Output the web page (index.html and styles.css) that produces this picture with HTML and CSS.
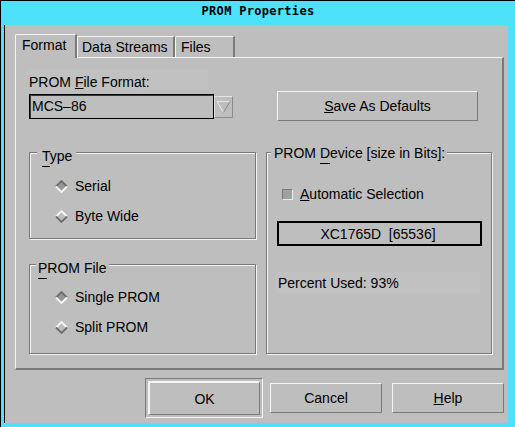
FILE: index.html
```html
<!DOCTYPE html>
<html>
<head>
<meta charset="utf-8">
<title>PROM Properties</title>
<link rel="stylesheet" href="styles.css">
</head>
<body>
<div class="frame">
  <div class="titlebar"><span class="title">PROM Properties</span></div>
  <div class="client">
    <div class="tabs">
      <div class="tab tab-active tab-format">Format</div>
      <div class="tab tab-data">Data Streams</div>
      <div class="tab tab-files">Files</div>
    </div>
    <div class="panel">
      <div class="col-left">
        <div class="field-label">PROM <span class="mn">F</span>ile Format:</div>
        <div class="combo-row">
          <div class="combo">MCS–86</div>
          <svg class="combo-arrow" width="19" height="22" viewBox="0 0 19 22">
            <path d="M0.5 21.5V0.5H18.5" stroke="#e4e4e4" fill="none"/>
            <path d="M18.5 0.5V21.5H0.5" stroke="#8a8a8a" fill="none"/>
            <path d="M3 5.5H16" stroke="#e8e8e8" fill="none"/>
            <path d="M3 5.5L9.5 16.5" stroke="#e8e8e8" fill="none"/>
            <path d="M16 5.5L9.5 16.5" stroke="#8a8a8a" fill="none"/>
          </svg>
        </div>
        <div class="group group-type">
          <div class="legend legend-type"><span class="mn-low">T</span>ype</div>
          <div class="radio radio-first-type">
            <svg class="diamond" width="13" height="13" viewBox="0 0 13 13">
              <polygon points="6.5,1 12,6.5 6.5,12 1,6.5" fill="#969696"/>
              <path d="M1 6.5L6.5 1L12 6.5" stroke="#6e6e6e" stroke-width="1.8" fill="none"/>
              <path d="M1 6.5L6.5 12L12 6.5" stroke="#f6f6f6" stroke-width="1.8" fill="none"/>
            </svg>
            <span>Serial</span>
          </div>
          <div class="radio radio-next">
            <svg class="diamond" width="13" height="13" viewBox="0 0 13 13">
              <path d="M1 6.5L6.5 1L12 6.5" stroke="#f6f6f6" stroke-width="1.8" fill="none"/>
              <path d="M1 6.5L6.5 12L12 6.5" stroke="#6e6e6e" stroke-width="1.8" fill="none"/>
            </svg>
            <span>Byte Wide</span>
          </div>
        </div>
        <div class="group group-file">
          <div class="legend legend-file"><span class="mn-low">P</span>ROM File</div>
          <div class="radio radio-first-file">
            <svg class="diamond" width="13" height="13" viewBox="0 0 13 13">
              <polygon points="6.5,1 12,6.5 6.5,12 1,6.5" fill="#969696"/>
              <path d="M1 6.5L6.5 1L12 6.5" stroke="#6e6e6e" stroke-width="1.8" fill="none"/>
              <path d="M1 6.5L6.5 12L12 6.5" stroke="#f6f6f6" stroke-width="1.8" fill="none"/>
            </svg>
            <span>Single PROM</span>
          </div>
          <div class="radio radio-next">
            <svg class="diamond" width="13" height="13" viewBox="0 0 13 13">
              <path d="M1 6.5L6.5 1L12 6.5" stroke="#f6f6f6" stroke-width="1.8" fill="none"/>
              <path d="M1 6.5L6.5 12L12 6.5" stroke="#6e6e6e" stroke-width="1.8" fill="none"/>
            </svg>
            <span>Split PROM</span>
          </div>
        </div>
      </div>
      <div class="col-right">
        <button class="btn btn-save"><span class="mn">S</span>ave As Defaults</button>
        <div class="group group-device">
          <div class="legend legend-device">PROM <span class="mn-low">D</span>evice [size in Bits]:</div>
          <div class="check-row">
            <span class="checkbox"></span>
            <span><span class="mn">A</span>utomatic Selection</span>
          </div>
          <div class="xc-box">XC1765D  [65536]</div>
          <div class="percent">Percent Used: 93%</div>
        </div>
      </div>
    </div>
    <div class="buttons">
      <div class="ok-ring"><button class="btn btn-ok">OK</button></div>
      <button class="btn btn-cancel">Cancel</button>
      <button class="btn btn-help"><span class="mn">H</span>elp</button>
    </div>
  </div>
</div>
</body>
</html>
```

FILE: styles.css
```css
* {
  box-sizing: border-box;
}

html, body {
  margin: 0;
  padding: 0;
}

body {
  width: 515px;
  height: 427px;
  overflow: hidden;
  background: #4ee1fa;
  font-family: "Liberation Sans", Arial, sans-serif;
  font-size: 14px;
  color: #000;
}

.frame {
  width: 515px;
  height: 427px;
  display: flex;
  flex-direction: column;
  background: #4ee1fa;
  border-top: 1px solid #000;
  border-left: 1px solid #000;
}

.titlebar {
  height: 24px;
  padding-bottom: 4px;
  display: flex;
  align-items: center;
  justify-content: center;
}

.title {
  font-family: "DejaVu Sans Mono", monospace;
  font-weight: bold;
  font-size: 12px;
  letter-spacing: 0.3px;
  line-height: 14px;
}

.client {
  flex: 1;
  margin: 0 7px 4px 3px;
  border-left: 1px solid #000;
  background: #bebebe;
  padding: 9px 4px 0 10px;
  display: flex;
  flex-direction: column;
}

/* Tabs */
.tabs {
  display: flex;
  align-items: flex-end;
  height: 23px;
}

.tab {
  height: 21px;
  padding-top: 2px;
  line-height: 16px;
  white-space: nowrap;
  border-top: 1px solid #f4f4f4;
  border-left: 1px solid #f4f4f4;
  border-right: 2px solid #7a7a7a;
  border-top-left-radius: 2px;
  background: #bebebe;
}

.tab-active {
  height: 24px;
  margin-bottom: -1px;
  position: relative;
  z-index: 1;
}

.tab-format {
  width: 62px;
  padding-left: 6px;
}

.tab-data {
  width: 98px;
  padding-left: 4px;
}

.tab-files {
  width: 60px;
  padding-left: 5px;
}

/* Panel */
.panel {
  height: 313px;
  display: flex;
  gap: 9px;
  padding: 12px 9px 0 13px;
  border-top: 1px solid #f4f4f4;
  border-left: 1px solid #f4f4f4;
  border-right: 2px solid #7a7a7a;
  border-bottom: 2px solid #7a7a7a;
}

.col-left {
  width: 228px;
  display: flex;
  flex-direction: column;
}

.col-right {
  width: 227px;
  display: flex;
  flex-direction: column;
}

.field-label {
  width: 179px;
  height: 20px;
  padding-top: 4px;
  line-height: 16px;
  background: #c1c1c1;
}

.mn {
  text-decoration: underline;
}

.mn-low {
  border-bottom: 1px solid #000;
  padding-bottom: 2px;
}

.combo-row {
  margin-top: 4px;
  display: flex;
  align-items: center;
  height: 25px;
}

.combo {
  width: 185px;
  height: 25px;
  border: 1px solid #000;
  box-shadow: inset 1px 1px 0 #3a3a3a;
  padding-left: 2px;
  line-height: 23px;
  white-space: nowrap;
}

.combo-arrow {
  display: block;
}

/* Groups */
.group {
  display: flex;
  flex-direction: column;
  border: 1px solid #7a7a7a;
  box-shadow: inset 1px 1px 0 #f4f4f4, 1px 1px 0 #f4f4f4;
}

.legend {
  align-self: flex-start;
  line-height: 16px;
  background: #bebebe;
  white-space: nowrap;
}

.group-type {
  width: 227px;
  height: 87px;
  margin-top: 33px;
}

.legend-type {
  margin: -5px 0 0 7px;
  padding: 0 4px 0 5px;
}

.group-file {
  width: 227px;
  height: 90px;
  margin-top: 25px;
}

.legend-file {
  margin: -5px 0 0 6px;
  padding: 0 3px 0 2px;
}

.group-device {
  width: 226px;
  height: 202px;
  margin-top: 31px;
}

.legend-device {
  margin: -8px 0 0 4px;
  padding: 0 2px 0 3px;
}

.radio {
  display: flex;
  align-items: center;
  height: 16px;
  line-height: 16px;
  margin-left: 25px;
  white-space: nowrap;
}

.radio-first-type {
  margin-top: 14px;
}

.radio-first-file {
  margin-top: 13px;
}

.radio-next {
  margin-top: 14px;
}

.diamond {
  display: block;
  margin-right: 7px;
}

.check-row {
  display: flex;
  align-items: center;
  height: 16px;
  line-height: 16px;
  margin: 25px 0 0 15px;
  white-space: nowrap;
}

.checkbox {
  width: 11px;
  height: 11px;
  margin-right: 7px;
  background: #a0a0a0;
  border: 1px solid;
  border-color: #7a7a7a #ececec #ececec #7a7a7a;
}

.xc-box {
  width: 205px;
  height: 25px;
  margin: 19px 0 0 10px;
  border: 2px solid #000;
  display: flex;
  align-items: center;
  justify-content: center;
  white-space: pre;
  padding-right: 3px;
}

.percent {
  width: 204px;
  height: 22px;
  margin: 26px 0 0 9px;
  padding-left: 2px;
  line-height: 22px;
  background: #c1c1c1;
  white-space: nowrap;
}

/* Buttons */
.btn {
  font-family: inherit;
  font-size: 14px;
  color: #000;
  background: #bebebe;
  border: 1px solid;
  border-color: #f4f4f4 #7a7a7a #7a7a7a #f4f4f4;
  padding: 0;
  margin: 0;
  line-height: 16px;
  white-space: nowrap;
}

.btn-save {
  width: 201px;
  height: 30px;
  margin: 21px 0 0 11px;
}

.buttons {
  margin-top: 8px;
  padding-left: 130px;
  display: flex;
  align-items: center;
}

.ok-ring {
  width: 118px;
  height: 40px;
  padding: 2px;
  border: 1px solid;
  border-color: #7a7a7a #f4f4f4 #f4f4f4 #7a7a7a;
  display: flex;
}

.btn-ok {
  flex: 1;
  border-width: 2px 1px 1px 2px;
}

.btn-cancel {
  width: 112px;
  height: 30px;
  margin-left: 7px;
}

.btn-help {
  width: 112px;
  height: 30px;
  margin-left: 10px;
}
```
